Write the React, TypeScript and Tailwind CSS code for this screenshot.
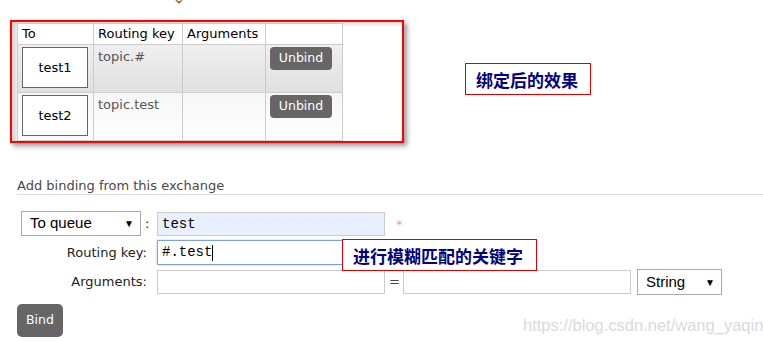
import React from "react";

const sans = { fontFamily: '"DejaVu Sans", Verdana, sans-serif' };
const arial = { fontFamily: '"Liberation Sans", Arial, sans-serif' };
const mono = { fontFamily: '"Liberation Mono", "Courier New", monospace' };
const cjk = { fontFamily: '"Noto Sans CJK SC", "Noto Sans", sans-serif' };

function QueueBox({ name }: { name: string }) {
  return (
    <div className="w-[66px] h-[41px] border border-[#666] bg-white flex items-center justify-center text-[13px] text-black">
      {name}
    </div>
  );
}

function Unbind() {
  return (
    <button className="w-[62px] h-[23px] rounded-[4px] bg-[#666] text-white text-[12.5px] leading-none flex items-center justify-center">
      Unbind
    </button>
  );
}

function Select({ label, w }: { label: string; w: string }) {
  return (
    <div
      className={`${w} h-full border border-[#a9a9a9] bg-white flex items-center justify-between pl-[8px] pr-[6px] text-[15px] text-black`}
      style={arial}
    >
      <span>{label}</span>
      <span className="text-[10px]">▼</span>
    </div>
  );
}

export default function App() {
  return (
    <div className="w-[763px] h-[341px] bg-white relative overflow-hidden text-[#222]" style={sans}>
      <div className="h-[20px] pl-[175px]">
        <svg width="8" height="5" viewBox="0 0 8 5">
          <path d="M1 0 L4 3 L7 0" fill="none" stroke="#b07a3a" strokeWidth="1.5" />
          <path d="M3 1 L4 2.5 L5 1" fill="none" stroke="#4a6fa5" strokeWidth="1" />
        </svg>
      </div>

      <div className="flex items-start">
        <div className="ml-[10px] w-[394px] h-[123px] border-2 border-[#ff0000] bg-white pl-[5px] pt-[1px] shadow-[inset_4px_2px_4px_rgba(0,0,0,0.18),3px_3px_5px_rgba(0,0,0,0.4)]">
          <table className="border-collapse table-fixed w-[325px] text-[13px]">
            <colgroup>
              <col className="w-[76px]" />
              <col className="w-[89px]" />
              <col className="w-[83px]" />
              <col className="w-[77px]" />
            </colgroup>
            <thead>
              <tr className="h-[21px] bg-white text-black">
                <th className="border border-[#ccc] font-normal text-left pl-[4px] py-0">To</th>
                <th className="border border-[#ccc] font-normal text-left pl-[4px] py-0">Routing key</th>
                <th className="border border-[#ccc] font-normal text-left pl-[4px] py-0">Arguments</th>
                <th className="border border-[#ccc] font-normal text-left pl-[4px] py-0"></th>
              </tr>
            </thead>
            <tbody>
              <tr className="h-[48px] bg-gradient-to-b from-[#efefef] to-[#e0e0e0]">
                <td className="border border-[#ccc] align-top pl-[4px] pt-[2px]">
                  <QueueBox name="test1" />
                </td>
                <td className="border border-[#ccc] align-top pl-[4px] pt-[2px] text-[#555]">topic.#</td>
                <td className="border border-[#ccc] align-top"></td>
                <td className="border border-[#ccc] align-top pl-[4px] pt-[2px]">
                  <Unbind />
                </td>
              </tr>
              <tr className="h-[48px] bg-gradient-to-b from-[#f6f6f6] to-[#ffffff]">
                <td className="border border-[#ccc] align-top pl-[4px] pt-[2px]">
                  <QueueBox name="test2" />
                </td>
                <td className="border border-[#ccc] align-top pl-[4px] pt-[2px] text-[#555]">topic.test</td>
                <td className="border border-[#ccc] align-top"></td>
                <td className="border border-[#ccc] align-top pl-[4px] pt-[2px]">
                  <Unbind />
                </td>
              </tr>
            </tbody>
          </table>
        </div>

        <div
          className="ml-[61px] mt-[43px] w-[126px] h-[32px] border border-[#e00000] bg-white flex items-center pl-[10px] text-[17px] font-bold text-[#000080] leading-none"
          style={cjk}
        >
          绑定后的效果
        </div>
      </div>

      <div className="mt-[35px] ml-[17px] h-[17px] border-b border-[#ddd] text-[13px] leading-[16px] text-[#484848]">
        Add binding from this exchange
      </div>

      <div className="mt-[16px] flex flex-col gap-[4px] text-[13px]">
        <div className="flex h-[25px] items-stretch">
          <div className="w-[147px] flex items-stretch">
            <div className="ml-[21px] h-full">
              <Select label="To queue" w="w-[120px]" />
            </div>
            <span className="ml-[4px] self-center">:</span>
          </div>
          <div
            className="ml-[10px] mt-[1px] w-[228px] h-[24px] border border-[#ccc] bg-[#e8f0fe] flex items-center pl-[4px] text-[14px] text-black"
            style={mono}
          >
            test
          </div>
          <span className="ml-[11px] mt-[7px] text-[13px] text-[#f99] leading-none">*</span>
        </div>

        <div className="flex h-[25px] items-center">
          <div className="w-[147px] text-right">Routing key:</div>
          <div
            className="ml-[10px] w-[228px] h-[25px] border border-[#7da2d8] rounded-[1px] bg-white flex items-center pl-[4px] text-[14px] text-black shadow-[0_0_2px_rgba(90,140,220,0.6)]"
            style={mono}
          >
            #.test<span className="inline-block w-[1px] h-[16px] bg-black" />
          </div>
        </div>

        <div className="flex h-[26px] items-center">
          <div className="w-[147px] text-right">Arguments:</div>
          <div className="ml-[10px] w-[228px] h-[24px] border border-[#ccc] bg-white" />
          <span className="ml-[4px] w-[14px] text-[#444]">=</span>
          <div className="w-[228px] h-[24px] border border-[#ccc] bg-white" />
          <div className="ml-[6px] h-[26px]">
            <Select label="String" w="w-[85px]" />
          </div>
        </div>
      </div>

      <button className="mt-[9px] ml-[17px] w-[46px] h-[33px] rounded-[5px] bg-[#666] text-white text-[12.5px] flex items-center justify-center">
        Bind
      </button>

      <div
        className="absolute left-[342px] top-[239px] w-[195px] h-[32px] border border-[#e00000] bg-white flex items-center pl-[10px] text-[17px] font-bold text-[#000080] leading-none"
        style={cjk}
      >
        进行模糊匹配的关键字
      </div>

      <div className="absolute left-[523px] top-[313px] text-[16.5px] text-[#dadada]" style={arial}>
        https://blog.csdn.net/wang_yaqin
      </div>
    </div>
  );
}
